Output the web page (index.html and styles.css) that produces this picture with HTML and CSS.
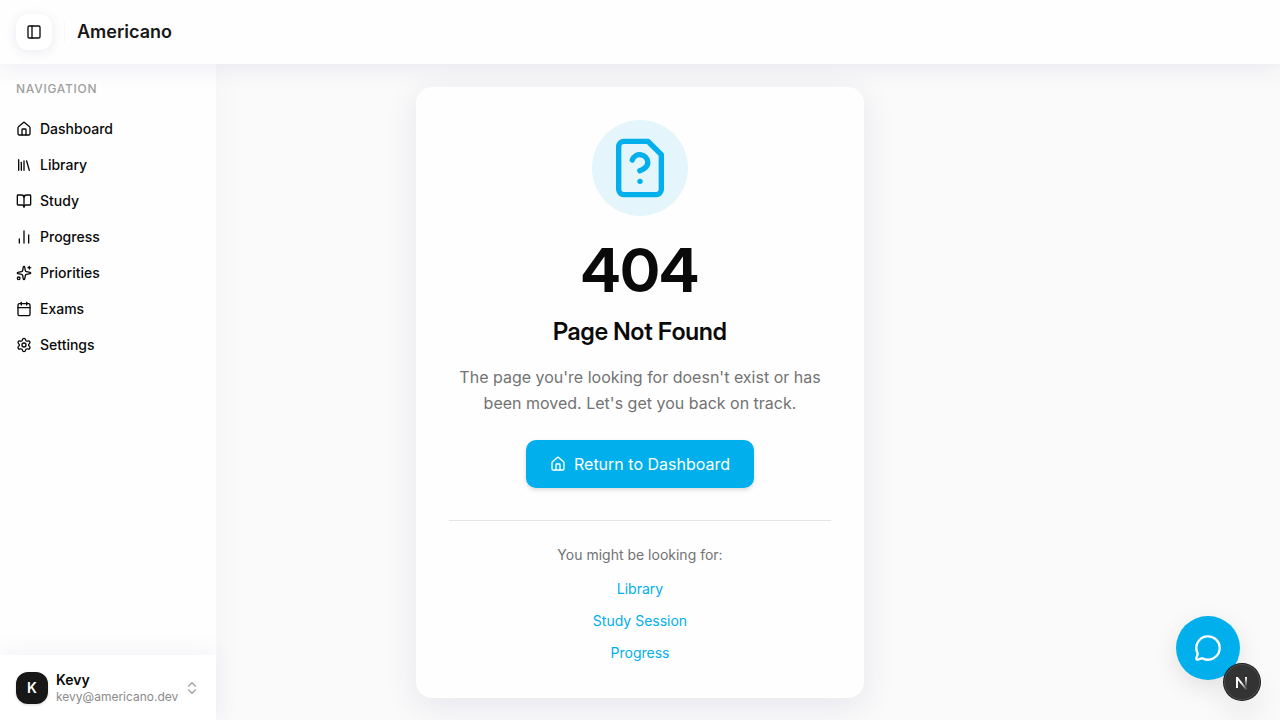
FILE: index.html
```html
<!DOCTYPE html>
<html lang="en">
<head>
<meta charset="utf-8">
<meta name="viewport" content="width=device-width, initial-scale=1">
<title>Page Not Found - Americano</title>
<link rel="stylesheet" href="styles.css">
</head>
<body>
<header class="topbar">
  <button class="toggle" type="button" aria-label="Toggle sidebar">
    <svg class="icon" viewBox="0 0 24 24"><rect width="18" height="18" x="3" y="3" rx="2"/><path d="M9 3v18"/></svg>
  </button>
  <span class="divider"></span>
  <span class="brand">Americano</span>
</header>
<div class="layout">
  <aside class="sidebar">
    <nav class="nav" aria-label="Navigation">
      <h2 class="nav-title">NAVIGATION</h2>
      <ul class="nav-list">
        <li><a class="nav-link" href="#"><svg class="icon" viewBox="0 0 24 24"><path d="M15 21v-8a1 1 0 0 0-1-1h-4a1 1 0 0 0-1 1v8"/><path d="M3 10a2 2 0 0 1 .709-1.528l7-5.999a2 2 0 0 1 2.582 0l7 5.999A2 2 0 0 1 21 10v9a2 2 0 0 1-2 2H5a2 2 0 0 1-2-2z"/></svg>Dashboard</a></li>
        <li><a class="nav-link" href="#"><svg class="icon" viewBox="0 0 24 24"><path d="m16 6 4 14"/><path d="M12 6v14"/><path d="M8 8v12"/><path d="M4 4v16"/></svg>Library</a></li>
        <li><a class="nav-link" href="#"><svg class="icon" viewBox="0 0 24 24"><path d="M12 7v14"/><path d="M3 18a1 1 0 0 1-1-1V4a1 1 0 0 1 1-1h5a4 4 0 0 1 4 4 4 4 0 0 1 4-4h5a1 1 0 0 1 1 1v13a1 1 0 0 1-1 1h-6a3 3 0 0 0-3 3 3 3 0 0 0-3-3z"/></svg>Study</a></li>
        <li><a class="nav-link" href="#"><svg class="icon" viewBox="0 0 24 24"><path d="M5 21v-6"/><path d="M12 21V3"/><path d="M19 21V9"/></svg>Progress</a></li>
        <li><a class="nav-link" href="#"><svg class="icon" viewBox="0 0 24 24"><path d="M11.017 2.814a1 1 0 0 1 1.966 0l1.051 5.558a2 2 0 0 0 1.594 1.594l5.558 1.051a1 1 0 0 1 0 1.966l-5.558 1.051a2 2 0 0 0-1.594 1.594l-1.051 5.558a1 1 0 0 1-1.966 0l-1.051-5.558a2 2 0 0 0-1.594-1.594l-5.558-1.051a1 1 0 0 1 0-1.966l5.558-1.051a2 2 0 0 0 1.594-1.594z"/><path d="M20 2v4"/><path d="M22 4h-4"/><circle cx="4" cy="20" r="2"/></svg>Priorities</a></li>
        <li><a class="nav-link" href="#"><svg class="icon" viewBox="0 0 24 24"><path d="M8 2v4"/><path d="M16 2v4"/><rect width="18" height="18" x="3" y="4" rx="2"/><path d="M3 10h18"/></svg>Exams</a></li>
        <li><a class="nav-link" href="#"><svg class="icon" viewBox="0 0 24 24"><path d="M9.671 4.136a2.34 2.34 0 0 1 4.659 0 2.34 2.34 0 0 0 3.319 1.915 2.34 2.34 0 0 1 2.33 4.033 2.34 2.34 0 0 0 0 3.831 2.34 2.34 0 0 1-2.33 4.033 2.34 2.34 0 0 0-3.319 1.915 2.34 2.34 0 0 1-4.659 0 2.34 2.34 0 0 0-3.32-1.915 2.34 2.34 0 0 1-2.33-4.033 2.34 2.34 0 0 0 0-3.831A2.34 2.34 0 0 1 6.35 6.051a2.34 2.34 0 0 0 3.319-1.915"/><circle cx="12" cy="12" r="3"/></svg>Settings</a></li>
      </ul>
    </nav>
    <div class="account">
      <button class="account-button" type="button">
        <span class="avatar">K</span>
        <span class="identity"><span class="name">Kevy</span><span class="email">kevy@americano.dev</span></span>
        <svg class="icon chevrons" viewBox="0 0 24 24"><path d="m7 15 5 5 5-5"/><path d="m7 9 5-5 5 5"/></svg>
      </button>
    </div>
  </aside>
  <main class="content">
    <section class="card">
      <div class="badge">
        <svg class="icon badge-icon" viewBox="0 0 24 24"><path d="M15 2H6a2 2 0 0 0-2 2v16a2 2 0 0 0 2 2h12a2 2 0 0 0 2-2V7z"/><path d="M12 17h.01"/><path d="M9.1 9a3 3 0 0 1 5.82 1c0 2-3 3-3 3"/></svg>
      </div>
      <h1 class="code">404</h1>
      <h2 class="title">Page Not Found</h2>
      <p class="message">The page you're looking for doesn't exist or has been moved. Let's get you back on track.</p>
      <a class="home-link" href="#"><svg class="icon" viewBox="0 0 24 24"><path d="M15 21v-8a1 1 0 0 0-1-1h-4a1 1 0 0 0-1 1v8"/><path d="M3 10a2 2 0 0 1 .709-1.528l7-5.999a2 2 0 0 1 2.582 0l7 5.999A2 2 0 0 1 21 10v9a2 2 0 0 1-2 2H5a2 2 0 0 1-2-2z"/></svg>Return to Dashboard</a>
      <div class="suggestions">
        <p class="hint">You might be looking for:</p>
        <a class="suggestion" href="#">Library</a>
        <a class="suggestion" href="#">Study Session</a>
        <a class="suggestion" href="#">Progress</a>
      </div>
    </section>
  </main>
</div>
<button class="chat" type="button" aria-label="Open chat">
  <svg class="icon chat-icon" viewBox="0 0 24 24"><path d="M2.992 16.342a2 2 0 0 1 .094 1.167l-1.065 3.29a1 1 0 0 0 1.236 1.168l3.413-.998a2 2 0 0 1 1.099.092 10 10 0 1 0-4.777-4.719"/></svg>
</button>
<button class="devtools" type="button" aria-label="Open developer tools">
  <svg class="devtools-icon" viewBox="0 0 36 36">
    <defs>
      <linearGradient id="diag" gradientUnits="userSpaceOnUse" x1="18" y1="18" x2="24" y2="26"><stop offset="0" stop-color="#fff"/><stop offset="1" stop-color="#fff" stop-opacity="0"/></linearGradient>
      <linearGradient id="stem" gradientUnits="userSpaceOnUse" x1="22" y1="13" x2="22" y2="23"><stop offset="0" stop-color="#fff"/><stop offset="1" stop-color="#fff" stop-opacity="0"/></linearGradient>
    </defs>
    <path d="M13 13.500L22.500 25.500" fill="none" stroke="url(#diag)" stroke-width="2"/>
    <path d="M13 24V13" fill="none" stroke="#fff" stroke-width="2"/>
    <path d="M22 13v10" fill="none" stroke="url(#stem)" stroke-width="2"/>
  </svg>
</button>
</body>
</html>
```
FILE: styles.css
```css
* { box-sizing: border-box; margin: 0; }
body {
  min-height: 100vh;
  display: flex;
  flex-direction: column;
  background: #fafafa;
  color: #0a0a0a;
  font-family: Inter, "Liberation Sans", sans-serif;
  font-size: 14px;
  line-height: 20px;
}
button { border: 0; padding: 0; font: inherit; color: inherit; cursor: pointer; }
a { text-decoration: none; }
.icon {
  width: 16px;
  height: 16px;
  flex: none;
  fill: none;
  stroke: currentColor;
  stroke-width: 2;
  stroke-linecap: round;
  stroke-linejoin: round;
}
.topbar {
  position: relative;
  z-index: 2;
  height: 64px;
  padding: 0 16px;
  display: flex;
  align-items: center;
  gap: 12px;
  background: #fefefe;
  box-shadow: 0 4px 24px rgba(50, 50, 130, 0.09);
}
.toggle {
  width: 36px;
  height: 36px;
  display: grid;
  place-items: center;
  border-radius: 12px;
  background: #fff;
  box-shadow: 0 2px 12px rgba(60, 60, 140, 0.1);
}
.divider { width: 1px; height: 20px; background: #f7f7f8; }
.brand { font-size: 18px; line-height: 28px; font-weight: 600; color: #171717; }
.layout {
  flex: 1;
  display: grid;
  grid-template-columns: 216px 1fr 216px;
}
.sidebar {
  display: flex;
  flex-direction: column;
  justify-content: space-between;
  background: #fefefe;
  box-shadow: 0 8px 32px rgba(60, 60, 140, 0.03);
}
.nav { padding: 9px 8px; }
.nav-title {
  padding: 0 8px;
  margin-bottom: 8px;
  font-size: 12px;
  line-height: 32px;
  font-weight: 500;
  letter-spacing: 0.06em;
  color: #a0a0a0;
}
.nav-list { list-style: none; padding: 0; display: grid; gap: 4px; }
.nav-link {
  height: 32px;
  padding: 0 8px;
  display: flex;
  align-items: center;
  gap: 8px;
  font-weight: 500;
  color: #0a0a0a;
}
.account {
  padding: 9px 8px 8px;
  background: #fff;
  box-shadow: 0 -4px 24px rgba(60, 60, 140, 0.06);
}
.account-button {
  width: 100%;
  height: 48px;
  padding: 0 8px;
  display: flex;
  align-items: center;
  gap: 8px;
  background: transparent;
  text-align: left;
}
.avatar {
  width: 32px;
  height: 32px;
  flex: none;
  display: grid;
  place-items: center;
  border-radius: 12px;
  background: #171717;
  color: #fff;
  font-weight: 600;
  box-shadow: 0 1px 3px rgba(0, 0, 0, 0.15);
}
.identity { flex: 1; min-width: 0; display: grid; }
.name { line-height: 18px; font-weight: 600; }
.email { font-size: 12px; line-height: 16px; color: #8a8a8a; }
.chevrons { color: #a0a0a0; }
.content {
  display: grid;
  place-items: center;
  padding: 16px;
}
.card {
  width: 100%;
  max-width: 448px;
  padding: 33px;
  display: flex;
  flex-direction: column;
  align-items: center;
  border-radius: 16px;
  background: #fefefe;
  text-align: center;
  box-shadow: 0 8px 32px rgba(50, 50, 130, 0.1);
}
.badge {
  width: 96px;
  height: 96px;
  margin-bottom: 24px;
  display: grid;
  place-items: center;
  border-radius: 50%;
  background: #e4f5fc;
  color: #00afec;
}
.badge-icon { width: 64px; height: 64px; }
.code,
.title { margin-bottom: 16px; font-family: "Inter Display", Inter, "Liberation Sans", sans-serif; }
.code { font-size: 60px; line-height: 60px; font-weight: 700; }
.title { font-size: 24px; line-height: 32px; font-weight: 600; }
.message { margin-bottom: 24px; font-size: 16px; line-height: 26px; color: #737373; }
.home-link {
  height: 48px;
  margin-bottom: 32px;
  padding: 0 24px;
  display: flex;
  align-items: center;
  gap: 8px;
  border-radius: 10px;
  background: #00afec;
  color: #fff;
  font-size: 16px;
  font-weight: 400;
  box-shadow: 0 2px 4px rgba(0, 0, 0, 0.15);
}
.suggestions {
  width: 100%;
  padding-top: 24px;
  display: flex;
  flex-direction: column;
  align-items: center;
  gap: 8px;
  border-top: 1px solid #e5e5e5;
}
.hint { margin-bottom: 4px; color: #737373; }
.suggestion { line-height: 24px; color: #00afec; }
.chat {
  position: fixed;
  right: 40px;
  bottom: 40px;
  width: 64px;
  height: 64px;
  display: grid;
  place-items: center;
  border-radius: 50%;
  background: #00afec;
  color: #fff;
  box-shadow: 0 8px 24px rgba(0, 0, 0, 0.1);
}
.chat-icon { width: 28px; height: 28px; }
.devtools {
  position: fixed;
  z-index: 3;
  right: 20px;
  bottom: 20px;
  width: 36px;
  height: 36px;
  border-radius: 50%;
  background: #333;
  box-shadow: 0 0 0 1px #171717, inset 0 0 0 1px #4a4a4a, 0 16px 32px -8px rgba(0, 0, 0, 0.24);
}
.devtools-icon { display: block; width: 36px; height: 36px; }
```
